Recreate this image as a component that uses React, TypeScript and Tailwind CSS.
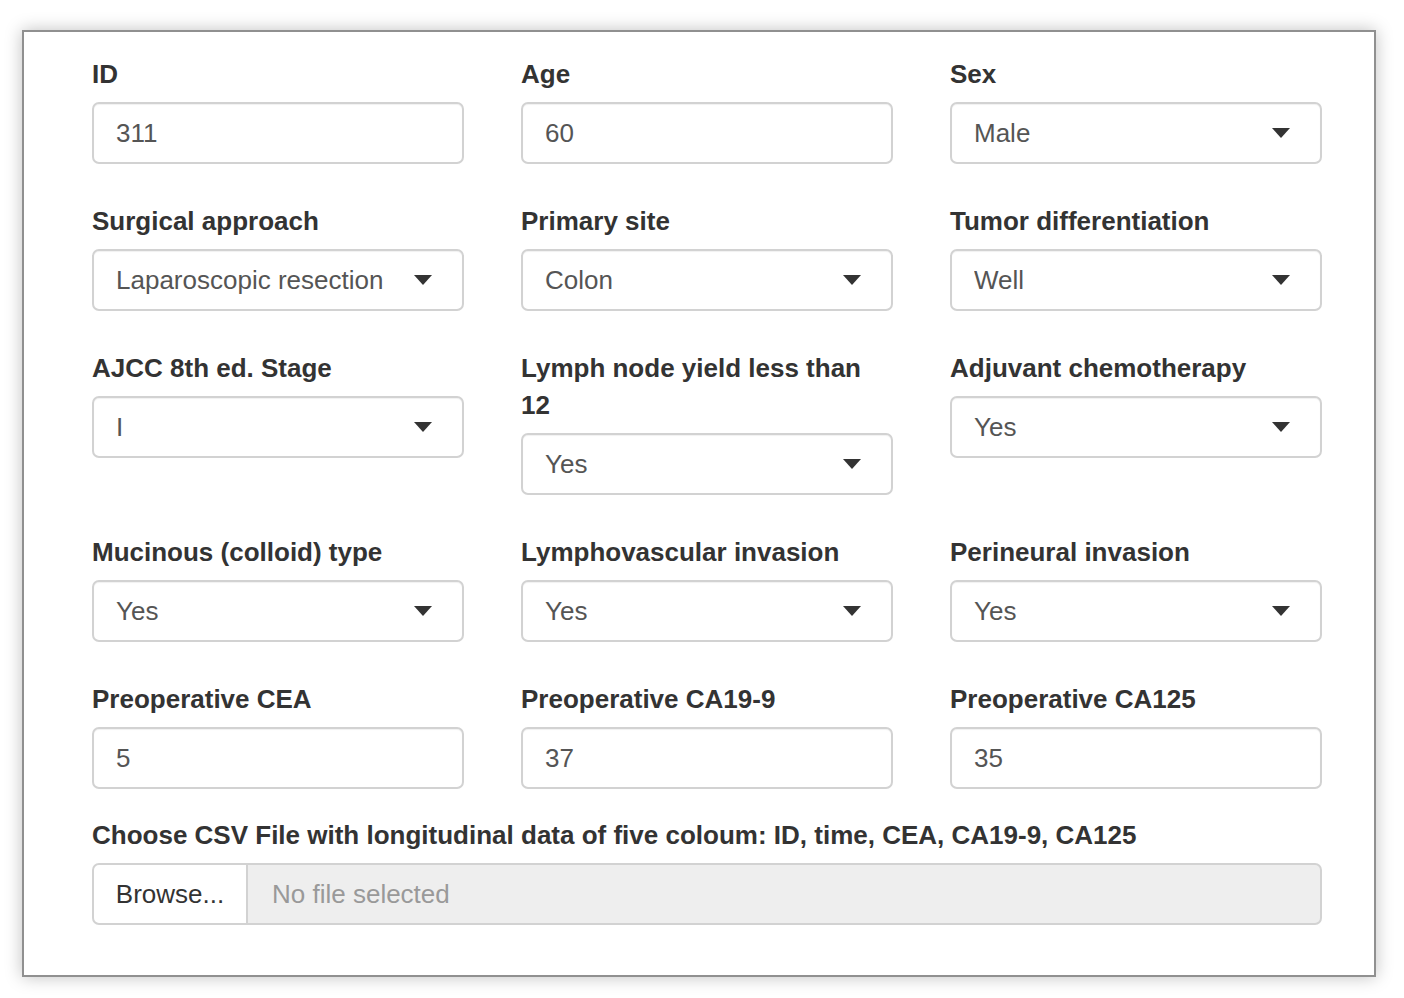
import React from 'react';

type Field = {
  label: string;
  value: string;
  kind: 'text' | 'select';
};

const fields: Field[] = [
  { label: 'ID', value: '311', kind: 'text' },
  { label: 'Age', value: '60', kind: 'text' },
  { label: 'Sex', value: 'Male', kind: 'select' },
  { label: 'Surgical approach', value: 'Laparoscopic resection', kind: 'select' },
  { label: 'Primary site', value: 'Colon', kind: 'select' },
  { label: 'Tumor differentiation', value: 'Well', kind: 'select' },
  { label: 'AJCC 8th ed. Stage', value: 'I', kind: 'select' },
  { label: 'Lymph node yield less than 12', value: 'Yes', kind: 'select' },
  { label: 'Adjuvant chemotherapy', value: 'Yes', kind: 'select' },
  { label: 'Mucinous (colloid) type', value: 'Yes', kind: 'select' },
  { label: 'Lymphovascular invasion', value: 'Yes', kind: 'select' },
  { label: 'Perineural invasion', value: 'Yes', kind: 'select' },
  { label: 'Preoperative CEA', value: '5', kind: 'text' },
  { label: 'Preoperative CA19-9', value: '37', kind: 'text' },
  { label: 'Preoperative CA125', value: '35', kind: 'text' },
];

const Caret = () => (
  <svg width="18" height="10" viewBox="0 0 18 10" className="shrink-0">
    <path d="M0 0 L18 0 L9 10 Z" fill="#333" />
  </svg>
);

const FormField: React.FC<{ field: Field }> = ({ field }) => (
  <div className="flex flex-col">
    <label className="text-[26px] leading-[37px] font-bold text-[#333] mb-[9px]">{field.label}</label>
    <div className="h-[62px] border-2 border-[#d2d2d2] rounded-[7px] bg-white flex items-center pl-[22px] pr-[30px] shadow-[inset_0_1px_1px_rgba(0,0,0,0.06)]">
      <span className="flex-1 text-[26px] text-[#555] truncate">{field.value}</span>
      {field.kind === 'select' && <Caret />}
    </div>
  </div>
);

export default function App() {
  return (
    <div className="min-h-screen bg-white pt-[30px] pl-[22px]" style={{ fontFamily: '"Liberation Sans", Arial, sans-serif' }}>
      <div className="w-[1354px] h-[947px] border-2 border-[#909090] bg-white shadow-[0_0_16px_rgba(0,0,0,0.25)] pl-[68px] pr-[52px] pt-[24px]">
        <div className="grid grid-cols-[372px_372px_372px] gap-x-[57px] gap-y-[39px] items-start">
          {fields.map((f) => (
            <FormField key={f.label} field={f} />
          ))}
        </div>
        <div className="mt-[28px] w-[1230px]">
          <label className="block text-[26px] leading-[37px] font-bold text-[#333] mb-[9px]">
            Choose CSV File with longitudinal data of five coloum: ID, time, CEA, CA19-9, CA125
          </label>
          <div className="flex h-[62px]">
            <div className="w-[156px] border-2 border-[#d2d2d2] rounded-l-[7px] bg-white flex items-center justify-center text-[26px] text-[#333]">
              Browse...
            </div>
            <div className="flex-1 border-2 border-l-0 border-[#d2d2d2] rounded-r-[7px] bg-[#eee] flex items-center pl-[24px] text-[26px] text-[#999]">
              No file selected
            </div>
          </div>
        </div>
      </div>
    </div>
  );
}
